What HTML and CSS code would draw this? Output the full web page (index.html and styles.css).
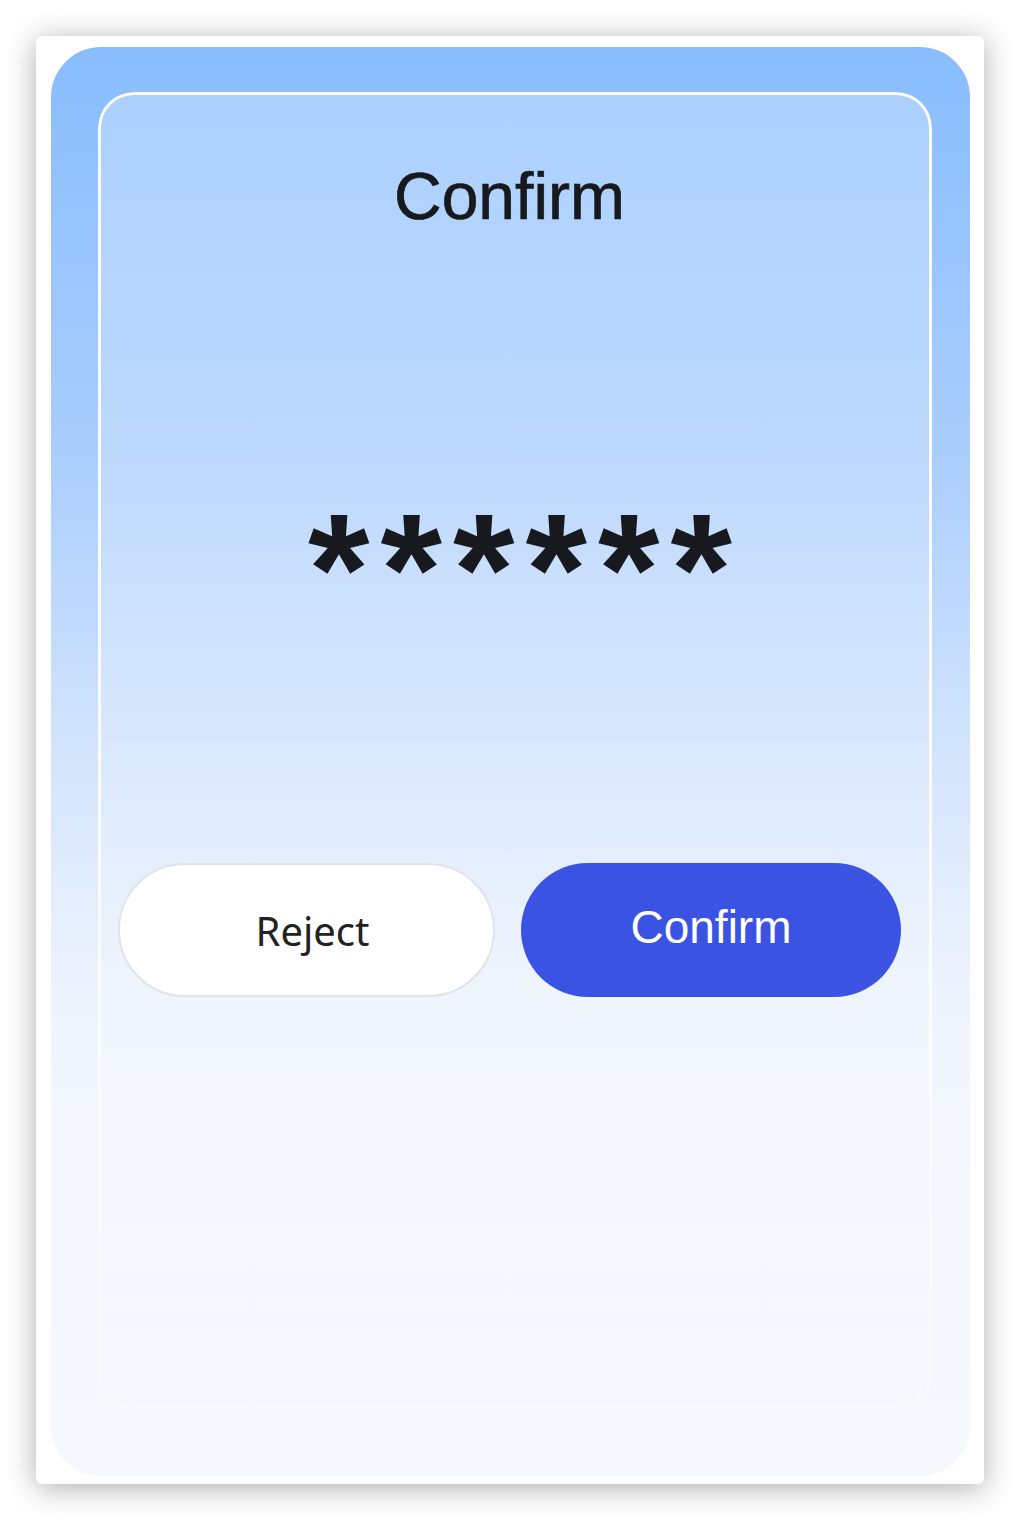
FILE: index.html
```html
<!DOCTYPE html>
<html lang="en">
<head>
<meta charset="utf-8">
<title>Confirm</title>
<link rel="stylesheet" href="styles.css">
</head>
<body>
<div class="frame">
  <div class="card">
    <div class="panel">
      <h1 class="title">Confirm</h1>
      <div class="code">******</div>
      <div class="actions">
        <button class="btn btn-reject" type="button">Reject</button>
        <button class="btn btn-confirm" type="button">Confirm</button>
      </div>
    </div>
  </div>
</div>
</body>
</html>
```

FILE: styles.css
```css
* { box-sizing: border-box; }
html, body { margin: 0; padding: 0; background: #ffffff; }
body {
  width: 1020px;
  height: 1520px;
  padding: 36px;
  font-family: "Liberation Sans", Arial, sans-serif;
}
.frame {
  width: 948px;
  height: 1448px;
  background: #ffffff;
  border-radius: 6px;
  box-shadow: 0 4px 30px rgba(0, 0, 0, 0.32);
  padding: 11px 14px 8px 15px;
}
.card {
  height: 100%;
  border-radius: 50px;
  background: linear-gradient(180deg, #88bdfd 0%, #a9cdfc 28%, #d4e5fc 50%, #ecf2fd 65%, #f3f7fd 75%, #f5f8fd 100%);
  padding: 45px 38px 66px 47px;
}
.panel {
  position: relative;
  height: 100%;
  border-radius: 36px;
  background: linear-gradient(180deg, rgba(255,255,255,0.28) 0%, rgba(255,255,255,0.18) 50%, rgba(255,255,255,0.05) 100%);
  padding: 71px 31px 0 20px;
  display: flex;
  flex-direction: column;
  align-items: center;
}
.panel::before {
  content: "";
  position: absolute;
  inset: 0;
  border-radius: 36px;
  padding: 3px;
  background: linear-gradient(180deg, rgba(255,255,255,0.95) 0%, rgba(255,255,255,0.85) 55%, rgba(255,255,255,0.35) 100%);
  -webkit-mask: linear-gradient(#000 0 0) content-box, linear-gradient(#000 0 0);
  -webkit-mask-composite: xor;
  mask-composite: exclude;
  pointer-events: none;
}
.title {
  margin: 0;
  font-size: 66px;
  line-height: 66px;
  font-weight: 400;
  color: #17191d;
  -webkit-text-stroke: 0.7px #17191d;
}
.code {
  margin-top: 261px;
  font-family: "Liberation Sans", Arial, sans-serif;
  font-weight: 700;
  font-size: 158px;
  line-height: 158px;
  height: 158px;
  letter-spacing: 11px;
  color: #17191e;
  padding-left: 32px;
}
.actions {
  margin-top: 215px;
  width: 100%;
  display: flex;
  gap: 26px;
}
.btn {
  height: 134px;
  border-radius: 67px;
  margin: 0;
  cursor: pointer;
}
.btn-reject {
  width: 377px;
  background: #ffffff;
  border: 2px solid #e2e3e6;
  font-family: "Noto Sans", "Open Sans", sans-serif;
  font-size: 40px;
  color: #222222;
  padding: 0 0 0 12px;
}
.btn-confirm {
  width: 380px;
  background: #3b53e2;
  border: none;
  font-family: "Liberation Sans", Arial, sans-serif;
  font-size: 46px;
  color: #ffffff;
  padding: 0 0 6px 0;
}
```
